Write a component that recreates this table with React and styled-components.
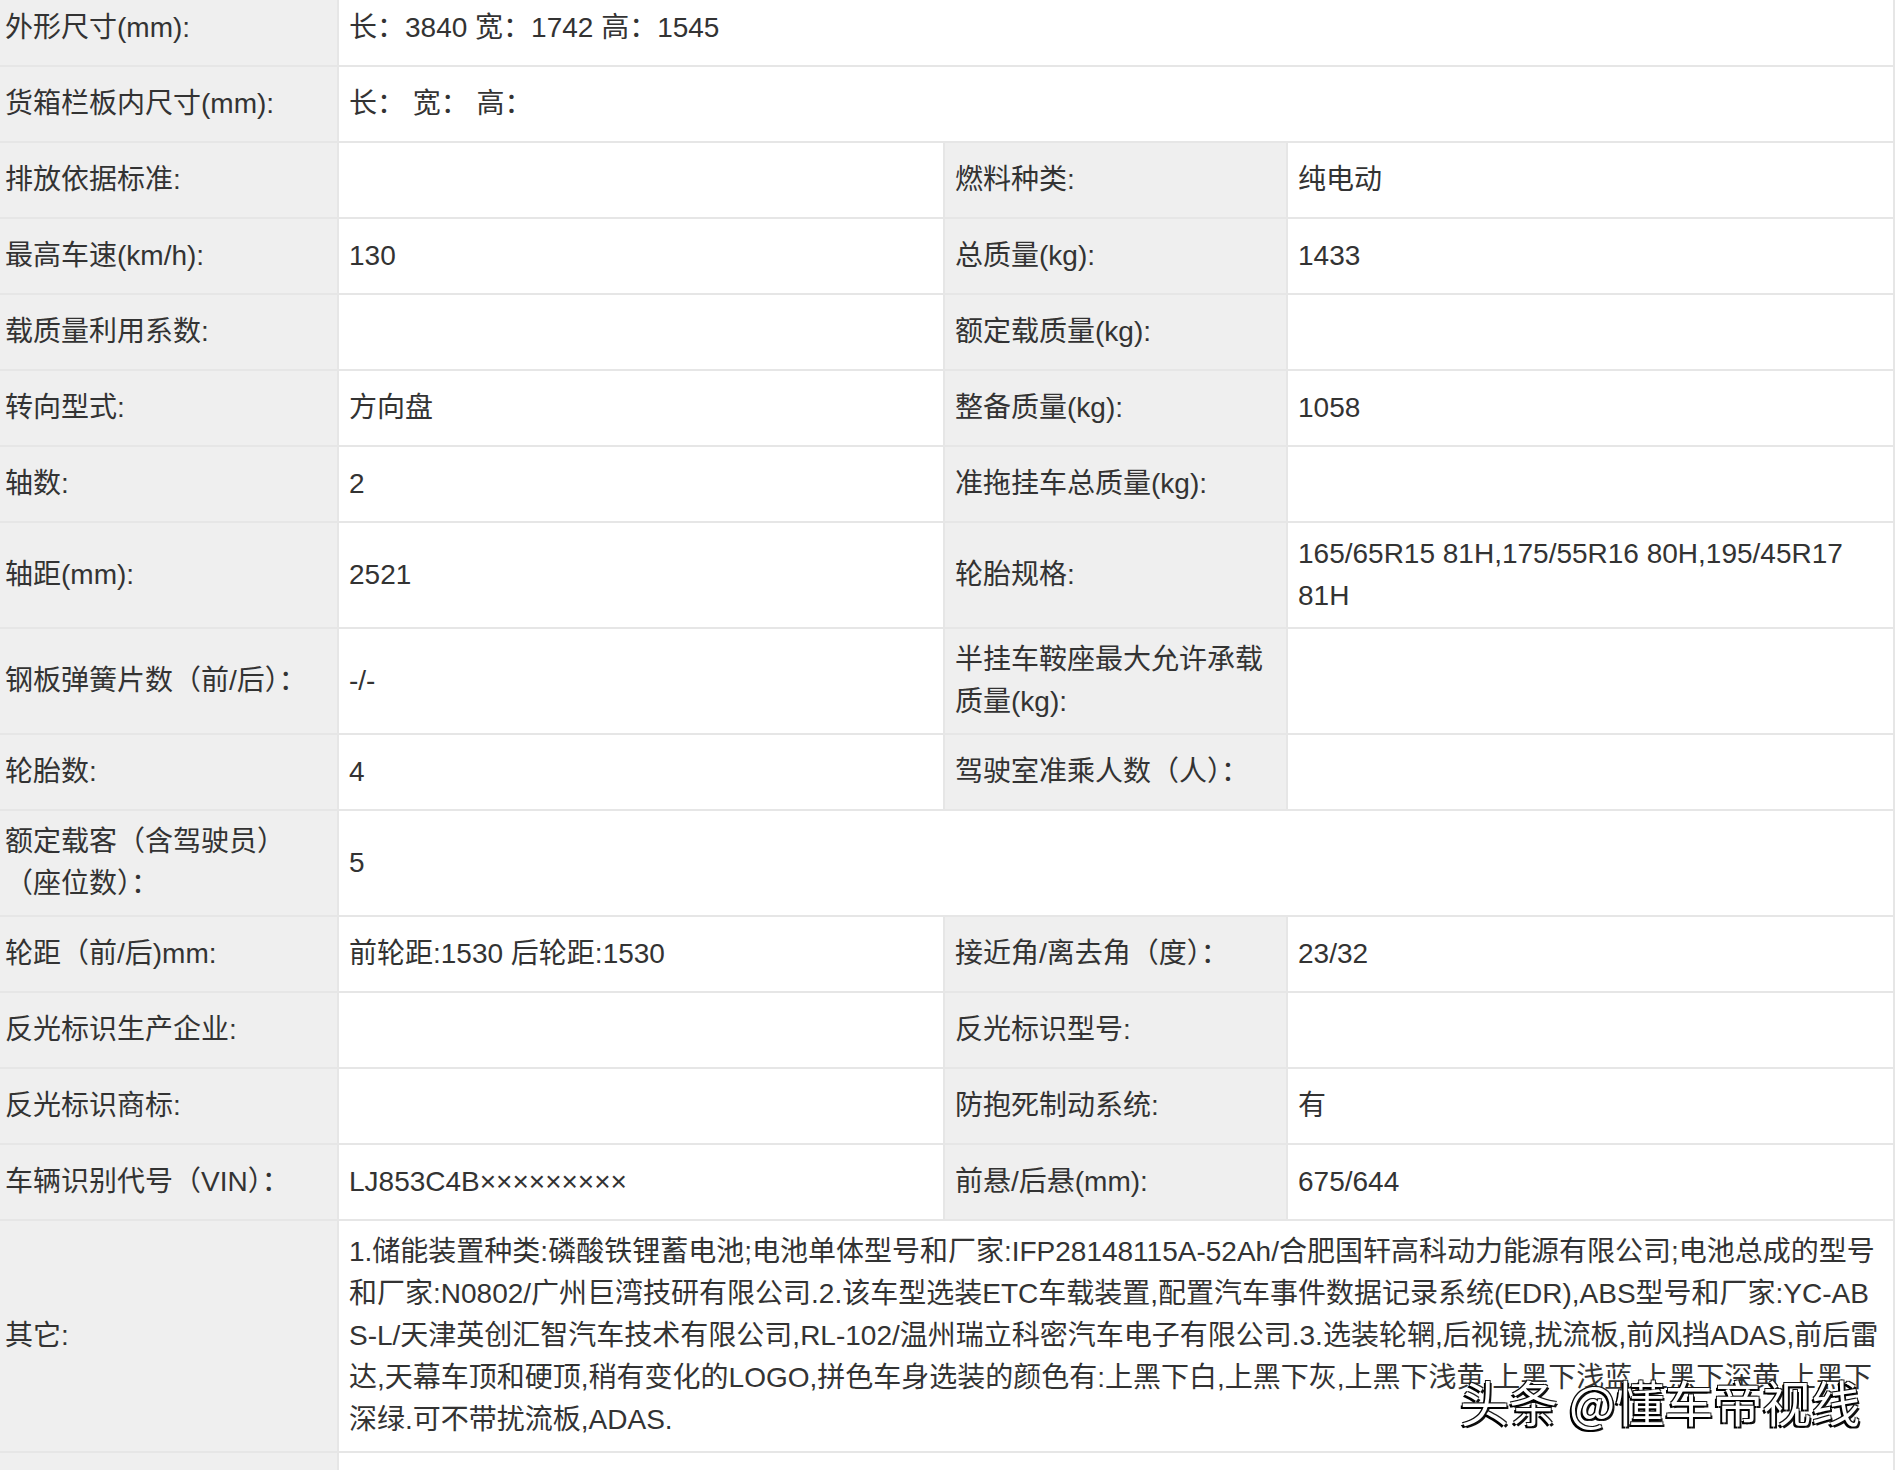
import React from "react";
import styled, { createGlobalStyle } from "styled-components";

const GlobalStyle = createGlobalStyle`
  html, body {
    margin: 0;
    padding: 0;
    background: #fff;
  }
  body {
    overflow: hidden;
    font-family: "Liberation Sans", "Noto Sans CJK SC", sans-serif;
  }
`;

const rows = [
  { label: "外形尺寸(mm):", value: "长：3840 宽：1742 高：1545", wide: true },
  { label: "货箱栏板内尺寸(mm):", value: "长： 宽： 高：", wide: true },
  { label: "排放依据标准:", value: "", label2: "燃料种类:", value2: "纯电动" },
  { label: "最高车速(km/h):", value: "130", label2: "总质量(kg):", value2: "1433" },
  { label: "载质量利用系数:", value: "", label2: "额定载质量(kg):", value2: "" },
  { label: "转向型式:", value: "方向盘", label2: "整备质量(kg):", value2: "1058" },
  { label: "轴数:", value: "2", label2: "准拖挂车总质量(kg):", value2: "" },
  {
    label: "轴距(mm):",
    value: "2521",
    label2: "轮胎规格:",
    value2: "165/65R15 81H,175/55R16 80H,195/45R17 81H",
  },
  { label: "钢板弹簧片数（前/后）：", value: "-/-", label2: "半挂车鞍座最大允许承载质量(kg):", value2: "" },
  { label: "轮胎数:", value: "4", label2: "驾驶室准乘人数（人）：", value2: "" },
  { label: "额定载客（含驾驶员）（座位数）：", value: "5", wide: true },
  { label: "轮距（前/后)mm:", value: "前轮距:1530 后轮距:1530", label2: "接近角/离去角（度）：", value2: "23/32" },
  { label: "反光标识生产企业:", value: "", label2: "反光标识型号:", value2: "" },
  { label: "反光标识商标:", value: "", label2: "防抱死制动系统:", value2: "有" },
  { label: "车辆识别代号（VIN）：", value: "LJ853C4B×××××××××", label2: "前悬/后悬(mm):", value2: "675/644" },
  {
    label: "其它:",
    value:
      "1.储能装置种类:磷酸铁锂蓄电池;电池单体型号和厂家:IFP28148115A-52Ah/合肥国轩高科动力能源有限公司;电池总成的型号和厂家:N0802/广州巨湾技研有限公司.2.该车型选装ETC车载装置,配置汽车事件数据记录系统(EDR),ABS型号和厂家:YC-ABS-L/天津英创汇智汽车技术有限公司,RL-102/温州瑞立科密汽车电子有限公司.3.选装轮辋,后视镜,扰流板,前风挡ADAS,前后雷达,天幕车顶和硬顶,稍有变化的LOGO,拼色车身选装的颜色有:上黑下白,上黑下灰,上黑下浅黄,上黑下浅蓝,上黑下深黄,上黑下深绿.可不带扰流板,ADAS.",
    wide: true,
    long: true,
  },
  { label: "", value: "", wide: true },
];

export default function App() {
  return (
    <Page>
      <GlobalStyle />
      <Table>
        <colgroup>
          <col style={{ width: 344 }} />
          <col style={{ width: 606 }} />
          <col style={{ width: 343 }} />
          <col style={{ width: 607 }} />
        </colgroup>
        <tbody>
          {rows.map((r, i) => (
            <tr key={i}>
              <Cell $label>{r.label}</Cell>
              {r.wide ? (
                <Cell colSpan={3} $breakAll={r.long}>
                  {r.value}
                </Cell>
              ) : (
                <>
                  <Cell>{r.value}</Cell>
                  <Cell $label>{r.label2}</Cell>
                  <Cell>{r.value2}</Cell>
                </>
              )}
            </tr>
          ))}
        </tbody>
      </Table>
      <Watermark>头条 @懂车帝视线</Watermark>
    </Page>
  );
}

const Page = styled.div`
  position: relative;
  width: 1898px;
  height: 1470px;
  overflow: hidden;
  background: #fff;
`;

const Table = styled.table`
  margin: -11px 0 0 -7px;
  width: 1900px;
  table-layout: fixed;
  border-collapse: collapse;
  font-size: 28px;
  line-height: 42px;
  color: #333;
`;

const Cell = styled.td`
  height: 54px;
  padding: 10px 12px 10px 10px;
  background: ${(p) => (p.$label ? "#efefef" : "#fff")};
  border: 2px solid #e6e6e6;
  vertical-align: middle;
  word-break: ${(p) => (p.$breakAll ? "break-all" : "normal")};
`;

const Watermark = styled.div`
  position: absolute;
  left: 1460px;
  top: 1370px;
  font-family: "Noto Sans CJK SC", sans-serif;
  font-size: 49px;
  line-height: 62px;
  color: #fff;
  white-space: nowrap;
  text-shadow: -2px 2px 0 #000, 2px 2px 0 #111, -1px -1px 0 #111, 1px -1px 0 #222;
`;
